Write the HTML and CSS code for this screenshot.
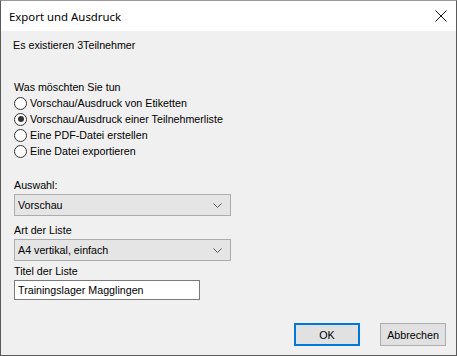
FILE: index.html
```html
<!DOCTYPE html>
<html lang="de">
<head>
    <meta charset="UTF-8">
    <title>Export und Ausdruck</title>
    <link rel="stylesheet" href="styles.css">
</head>
<body>
    <div class="window">
        <div class="titlebar">
            <span class="title">Export und Ausdruck</span>
            <svg class="close" width="12" height="12" viewBox="0 0 12 12">
                <path d="M0.5 0.5 L11.5 11.5 M11.5 0.5 L0.5 11.5" stroke="#111" stroke-width="1" fill="none"/>
            </svg>
        </div>
        <div class="content">
            <div class="info">Es existieren 3Teilnehmer</div>

            <div class="label question">Was möschten Sie tun</div>
            <div class="radios">
                <label class="radio"><span class="circle"></span>Vorschau/Ausdruck von Etiketten</label>
                <label class="radio"><span class="circle checked"></span>Vorschau/Ausdruck einer Teilnehmerliste</label>
                <label class="radio"><span class="circle"></span>Eine PDF-Datei erstellen</label>
                <label class="radio"><span class="circle"></span>Eine Datei exportieren</label>
            </div>

            <div class="label auswahl">Auswahl:</div>
            <div class="select">
                <span>Vorschau</span>
                <svg width="9" height="5" viewBox="0 0 9 5"><path d="M0.5 0.5 L4.5 4.5 L8.5 0.5" stroke="#555" fill="none"/></svg>
            </div>

            <div class="label art">Art der Liste</div>
            <div class="select">
                <span>A4 vertikal, einfach</span>
                <svg width="9" height="5" viewBox="0 0 9 5"><path d="M0.5 0.5 L4.5 4.5 L8.5 0.5" stroke="#555" fill="none"/></svg>
            </div>

            <div class="label titel">Titel der Liste</div>
            <div class="textbox">Trainingslager Magglingen</div>

            <div class="buttons">
                <button class="button default">OK</button>
                <button class="button">Abbrechen</button>
            </div>
        </div>
    </div>
</body>
</html>
```

FILE: styles.css
```css
html, body {
    margin: 0;
    padding: 0;
}
body {
    font-family: "Liberation Sans", Arial, sans-serif;
    font-size: 10.7px;
    color: #000;
    background: #fff;
}
.window {
    width: 457px;
    height: 356px;
    box-sizing: border-box;
    border: 1px solid #5a5a5a;
    border-top-color: #9a9a9a;
    background: #f0f0f0;
    display: flex;
    flex-direction: column;
}
.titlebar {
    height: 30px;
    background: #fff;
    display: flex;
    align-items: center;
    justify-content: space-between;
    padding: 0 9px 0 8px;
    flex-shrink: 0;
}
.title {
    font-family: "Noto Sans", "Open Sans", sans-serif;
    font-size: 11.4px;
    line-height: 16px;
    margin-top: 1px;
}
.close {
    display: block;
}
.content {
    flex: 1;
    padding: 0 10px 0 12px;
    line-height: 16px;
    display: flex;
    flex-direction: column;
}
.info {
    margin-top: 6px;
}
.label {
    padding-left: 1px;
}
.question {
    margin-top: 26px;
}
.radios {
    display: flex;
    flex-direction: column;
}
.radio {
    display: flex;
    align-items: center;
    height: 16px;
    padding-left: 1px;
}
.circle {
    width: 11px;
    height: 11px;
    border: 1px solid #333;
    border-radius: 50%;
    background: #fff;
    margin-right: 3px;
    position: relative;
    flex-shrink: 0;
}
.circle.checked::after {
    content: "";
    position: absolute;
    left: 2.5px;
    top: 2.5px;
    width: 6px;
    height: 6px;
    border-radius: 50%;
    background: #333;
}
.auswahl {
    margin-top: 18px;
}
.select {
    width: 204px;
    height: 20px;
    margin-top: 1px;
    margin-left: 1px;
    border: 1px solid #acacac;
    background: #e5e5e5;
    display: flex;
    align-items: center;
    justify-content: space-between;
    padding: 0 8px 0 3px;
}
.select svg {
    display: block;
}
.art {
    margin-top: 6px;
}
.titel {
    margin-top: 2px;
}
.textbox {
    width: 178px;
    height: 18px;
    margin-top: 1px;
    margin-left: 1px;
    border: 1px solid #7a7a7a;
    background: #fff;
    padding: 0 3px;
    line-height: 18px;
}
.buttons {
    display: flex;
    justify-content: flex-end;
    gap: 20px;
    margin-top: 23px;
}
.button {
    font-family: inherit;
    font-size: 10.7px;
    width: 66px;
    height: 23px;
    box-sizing: border-box;
    background: #e1e1e1;
    border: 1px solid #adadad;
    color: #000;
    padding: 0;
    margin: 0;
}
.button.default {
    border: 2px solid #0078d7;
}
```
